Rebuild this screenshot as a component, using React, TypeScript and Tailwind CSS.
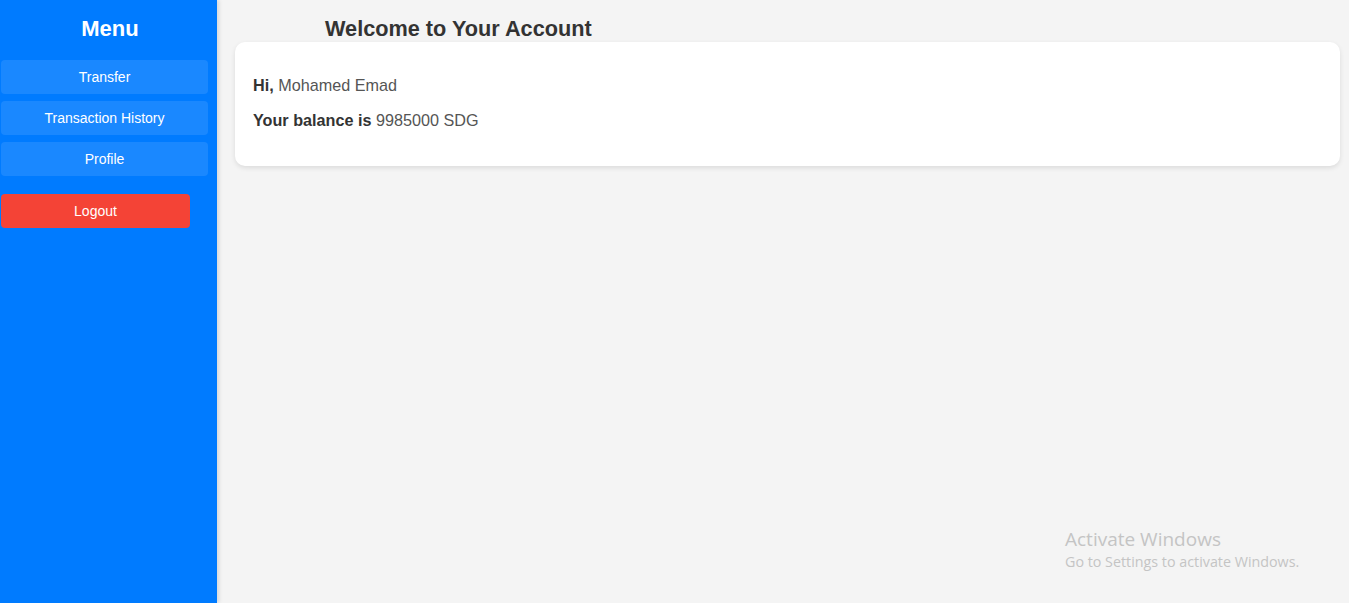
export default function App() {
  const links = ['Transfer', 'Transaction History', 'Profile']

  return (
    <div className="relative flex h-[603px] w-full overflow-hidden bg-[#f4f4f4] font-['Liberation_Sans',Arial,sans-serif]">
      {/* sidebar */}
      <aside className="z-10 flex w-[217px] shrink-0 flex-col bg-[#007bff] pt-[16px] shadow-[2px_0_4px_rgba(0,0,0,0.12)]">
        <h2 className="mb-[18px] pl-[3px] text-center text-[22px] leading-[26px] font-bold text-white">Menu</h2>
        <nav className="flex flex-col gap-[7px]">
          {links.map((l) => (
            <a
              key={l}
              href="#"
              className="ml-px flex h-[34px] w-[207px] items-center justify-center rounded-[4px] bg-[#1a88ff] text-[14px] text-white"
            >
              {l}
            </a>
          ))}
        </nav>
        <button className="mt-[18px] ml-px flex h-[34px] w-[189px] items-center justify-center rounded-[4px] bg-[#f44336] text-[14px] text-white">
          Logout
        </button>
      </aside>

      {/* main */}
      <main className="flex-1 pt-[17px] pr-[9px] pl-[18px]">
        <h1 className="ml-[90px] text-[21.7px] leading-[23px] font-bold text-[#333]">Welcome to Your Account</h1>
        <div className="mt-[2px] rounded-[10px] bg-white px-[18px] pt-[18px] pb-[20px] shadow-[0_2px_5px_rgba(0,0,0,0.1)]">
          <p className="my-[16px] text-[16.2px] leading-[19px] text-[#555]">
            <strong className="text-[#333]">Hi,</strong> Mohamed Emad
          </p>
          <p className="my-[16px] text-[16.2px] leading-[19px] text-[#555]">
            <strong className="text-[#333]">Your balance is</strong> 9985000 SDG
          </p>
        </div>
      </main>

      {/* os watermark */}
      <div className="pointer-events-none absolute top-[526px] left-[1065px] font-['Open_Sans',sans-serif] text-[#c4c4c4]">
        <div className="text-[19px] leading-[26px]">Activate Windows</div>
        <div className="text-[14.3px] leading-[20px]">Go to Settings to activate Windows.</div>
      </div>
    </div>
  )
}
